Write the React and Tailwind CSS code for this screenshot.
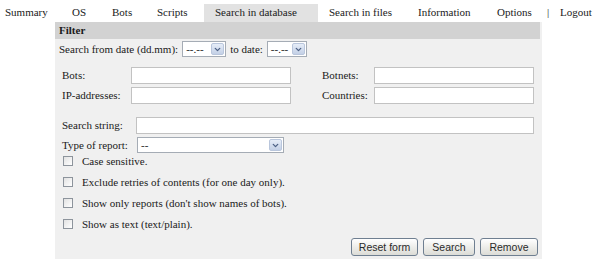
import { ChevronDown } from 'lucide-react'

// fixed cell widths so the menu items land where the old table cells did
const nav = [
  { label: 'Summary', cls: 'w-[61px] pl-[5px]' },
  { label: 'OS', cls: 'w-[40px] pl-[11px]' },
  { label: 'Bots', cls: 'w-[45px] pl-[11px]' },
  { label: 'Scripts', cls: 'w-[58px] pl-[11px]' },
  { label: 'Search in database', cls: 'w-[114px] pl-[11px] bg-[#e2e2e2]' },
  { label: 'Search in files', cls: 'w-[89px] pl-[11px]' },
  { label: 'Information', cls: 'w-[79px] pl-[11px]' },
  { label: 'Options', cls: 'w-[61px] pl-[11px]' },
  { label: '|', cls: 'w-[13px]' },
  { label: 'Logout', cls: 'pl-0' },
]

function Select({ value, width }) {
  return (
    <div className={`flex items-stretch h-[16px] border border-[#a5acb5] bg-white ${width}`}>
      <span className="flex-1 pl-[3px] leading-[14px] text-[11px]">{value}</span>
      <span className="w-[13px] m-[1px] flex items-center justify-center rounded-[2px] border border-[#b9c6dc] bg-gradient-to-b from-[#e6edf8] to-[#c3d0e6]">
        <ChevronDown size={9} strokeWidth={3.5} className="text-[#4d6185]" />
      </span>
    </div>
  )
}

function Input({ width }) {
  return <div className={`h-[17px] border border-[#c2c2c2] bg-white ${width}`} />
}

function Check({ label }) {
  return (
    <div className="flex items-center h-[21px] pl-[8px]">
      <span className="w-[10px] h-[10px] border border-[#8d949c] bg-gradient-to-br from-[#e2e2e2] to-white" />
      <span className="ml-[9px]">{label}</span>
    </div>
  )
}

function Button({ children, width }) {
  return (
    <button className={`h-[18px] ${width} rounded-[3px] border border-[#6f7f91] bg-gradient-to-b from-white to-[#dcdcd6] text-[10.5px] leading-none text-[#2a2a2a] [font-family:'Liberation_Sans',sans-serif]`}>
      {children}
    </button>
  )
}

export default function App() {
  return (
    <div className="w-[600px] h-[265px] bg-white text-[11px] text-[#1a1a1a] [font-family:'Liberation_Serif',serif] overflow-hidden">
      {/* Menu */}
      <div className="flex items-end h-[22px] pt-[4px]">
        {nav.map(({ label, cls }) => (
          <span key={label} className={`h-[18px] leading-[16px] shrink-0 whitespace-nowrap ${cls}`}>
            {label}
          </span>
        ))}
      </div>

      {/* Filter panel */}
      <div className="ml-[55px] w-[487px] h-[237px] bg-[#f0f0f0] flex flex-col">
        <div className="h-[17px] bg-[#d2d2d2] leading-[17px] pl-[4px] font-bold mr-[2px]">Filter</div>

        <div className="flex items-center h-[18px] mt-[1px] pl-[4px]">
          <span>Search from date (dd.mm):</span>
          <span className="ml-[4px]"><Select value="--.--" width="w-[44px]" /></span>
          <span className="ml-[4px]">to date:</span>
          <span className="ml-[4px]"><Select value="--.--" width="w-[40px]" /></span>
        </div>

        <div className="flex flex-col gap-[3px] mt-[9px] pl-[7px]">
          <div className="flex items-center">
            <span className="w-[69px]">Bots:</span>
            <Input width="w-[160px]" />
            <span className="w-[52px] ml-[31px]">Botnets:</span>
            <Input width="w-[160px]" />
          </div>
          <div className="flex items-center">
            <span className="w-[69px]">IP-addresses:</span>
            <Input width="w-[160px]" />
            <span className="w-[52px] ml-[31px]">Countries:</span>
            <Input width="w-[160px]" />
          </div>
        </div>

        <div className="flex items-center mt-[13px] pl-[7px]">
          <span className="w-[74px]">Search string:</span>
          <Input width="w-[398px]" />
        </div>
        <div className="flex items-center mt-[3px] pl-[7px]">
          <span className="w-[75px]">Type of report:</span>
          <Select value="--" width="w-[147px]" />
        </div>

        <div className="flex flex-col -mt-[3px]">
          <Check label="Case sensitive." />
          <Check label="Exclude retries of contents (for one day only)." />
          <Check label="Show only reports (don't show names of bots)." />
          <Check label="Show as text (text/plain)." />
        </div>

        <div className="flex justify-end gap-[5px] mt-auto mb-[3px] pr-[4px]">
          <Button width="w-[67px]">Reset form</Button>
          <Button width="w-[52px]">Search</Button>
          <Button width="w-[58px]">Remove</Button>
        </div>
      </div>
    </div>
  )
}
